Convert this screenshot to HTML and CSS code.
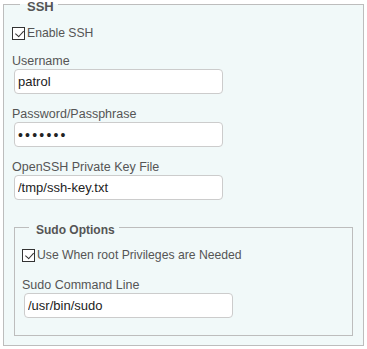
FILE: index.html
```html
<!DOCTYPE html>
<html>
<head>
<meta charset="utf-8">
<link rel="stylesheet" href="styles.css">
</head>
<body>
<fieldset class="group">
  <legend class="group-title">SSH</legend>
  <label class="check-row first">
    <input type="checkbox" class="cb" checked>
    <span>Enable SSH</span>
  </label>
  <div class="field">
    <label class="field-label">Username</label>
    <input class="text-input" type="text" value="patrol">
  </div>
  <div class="field">
    <label class="field-label">Password/Passphrase</label>
    <input class="text-input pw" type="password" value="secret1">
  </div>
  <div class="field">
    <label class="field-label">OpenSSH Private Key File</label>
    <input class="text-input" type="text" value="/tmp/ssh-key.txt">
  </div>
  <fieldset class="group inner">
    <legend class="group-title small">Sudo Options</legend>
    <label class="check-row">
      <input type="checkbox" class="cb" checked>
      <span>Use When root Privileges are Needed</span>
    </label>
    <div class="field last">
      <label class="field-label">Sudo Command Line</label>
      <input class="text-input" type="text" value="/usr/bin/sudo">
    </div>
  </fieldset>
</fieldset>
</body>
</html>
```

FILE: styles.css
```css
html, body {
  margin: 0;
  padding: 0;
  background: #ffffff;
  font-family: "Liberation Sans", Arial, sans-serif;
}

.group {
  margin: 0 3px;
  padding: 0 10px 9px 8px;
  border: 1px solid #bdbdbd;
  background: #f1f9f9;
  min-width: 0;
}

.group-title {
  margin-left: 8px;
  padding: 5px 4px 0 7px;
  line-height: 4px;
  font-size: 13px;
  font-weight: bold;
  color: #555555;
}

.group-title.small {
  margin-left: 7px;
  font-size: 12px;
}

.check-row {
  display: flex;
  align-items: center;
  height: 16px;
  margin-top: 16px;
  font-size: 12.2px;
  color: #555555;
}

.cb {
  appearance: none;
  -webkit-appearance: none;
  margin: 0 2px 0 0;
  width: 13px;
  height: 13px;
  border: 1px solid #333333;
  background: #ffffff;
  position: relative;
  flex: none;
}

.cb:checked::after {
  content: "";
  position: absolute;
  width: 7px;
  height: 3.5px;
  border-left: 1.5px solid #333333;
  border-bottom: 1.5px solid #333333;
  transform: rotate(-48deg);
  transform-origin: 0 0;
  top: 6px;
  left: 2px;
}

.field {
  display: flex;
  flex-direction: column;
  align-items: flex-start;
  margin-top: 12px;
}

.field-label {
  line-height: 16px;
  font-size: 12.5px;
  color: #555555;
}

.text-input {
  box-sizing: border-box;
  width: 209px;
  height: 25px;
  margin: 0 0 0 2px;
  padding: 0 3px;
  border: 1px solid #cccccc;
  border-radius: 4px;
  background: #ffffff;
  font-family: "Liberation Sans", Arial, sans-serif;
  font-size: 13px;
  color: #222222;
  outline: none;
}

.text-input.pw {
  letter-spacing: 2.2px;
  font-size: 14px;
}

.group.inner {
  margin: 23px 0 0 2px;
  padding: 0 10px 17px 7px;
  background: transparent;
}

.inner .check-row {
  margin-top: 15px;
}

.field.last {
  margin-top: 14px;
}
```
